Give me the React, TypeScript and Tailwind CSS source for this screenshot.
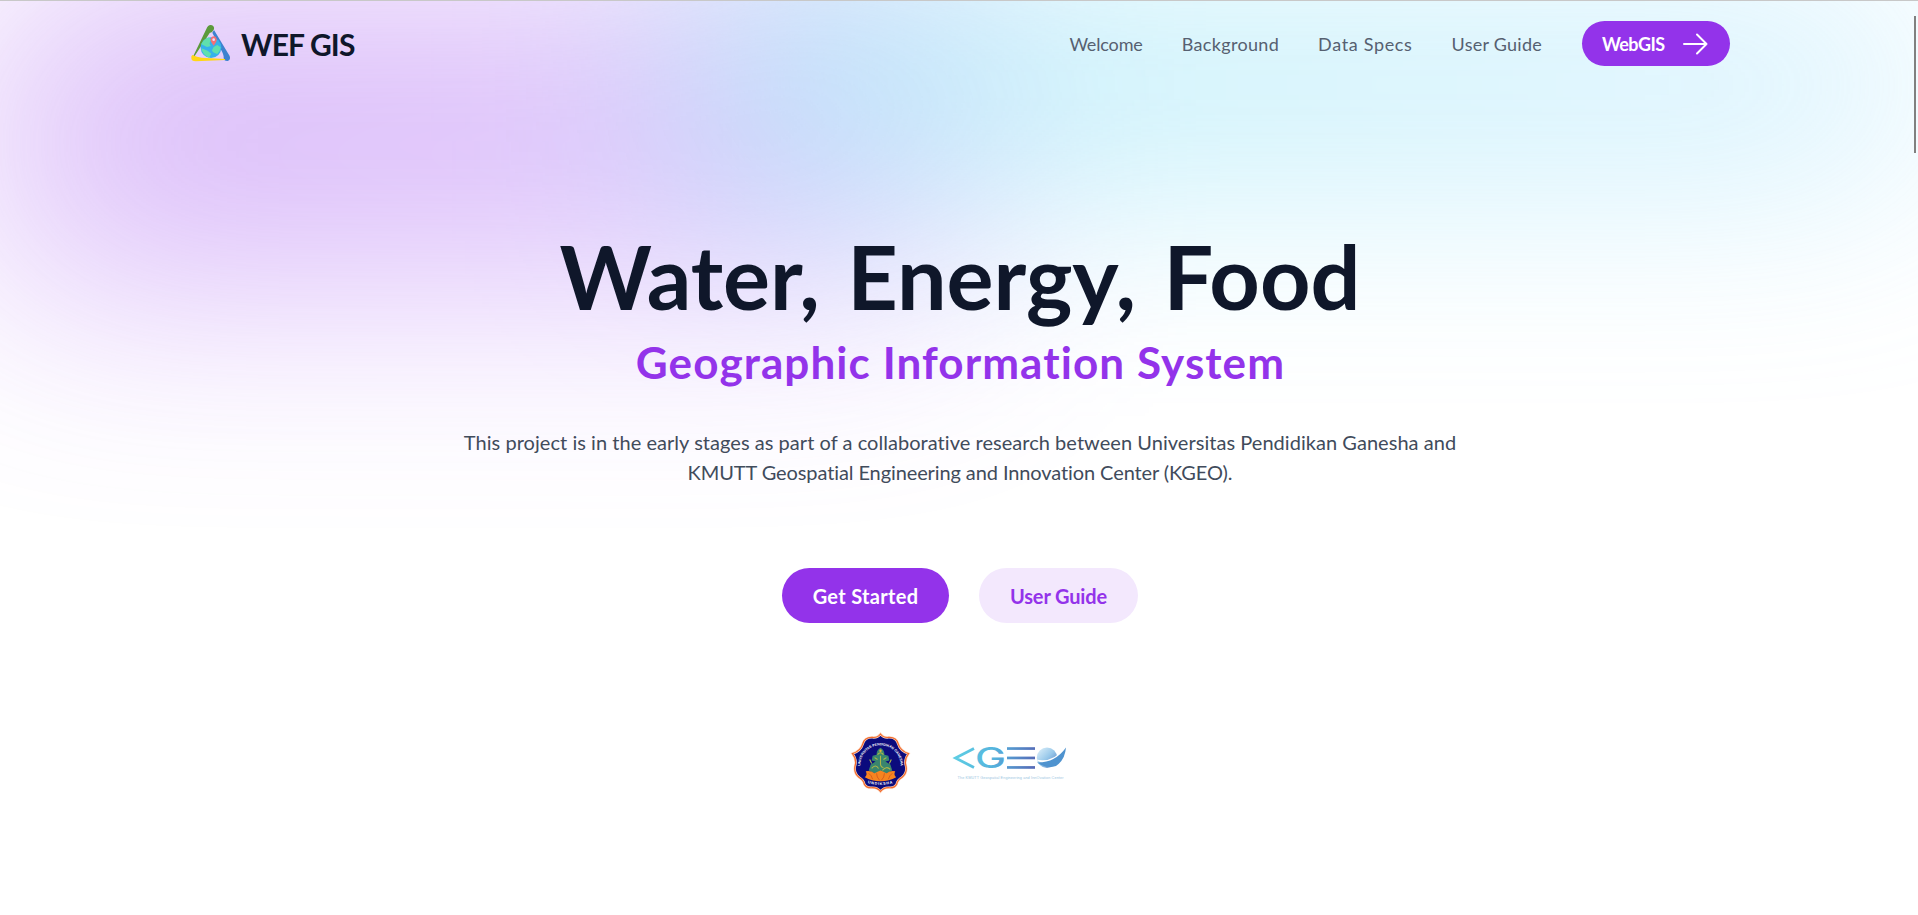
import type { ReactNode } from "react";

const CREST =
  "M30 1 Q33 5 38 4.5 Q46 4 48 11 Q50 18 58.5 21 Q54.5 26 55.5 32 Q58 40 52 45 Q47 48 46.5 52 Q44 56.5 38 55.5 Q33 55.5 30 59.5 Q27 55.5 22 55.5 Q16 56.5 13.5 52 Q13 48 8 45 Q2 40 4.5 32 Q5.5 26 1.5 21 Q10 18 12 11 Q14 4 22 4.5 Q27 5 30 1 Z";

function WefMark() {
  return (
    <svg viewBox="15 14 126 116" className="h-[38.67px] w-[42px] shrink-0" aria-hidden="true">
      <path d="M22 116 L64 29 Q69 16 78 17 Q89 19 87 30 Q84 38 74 41 L27 113 Z" fill="#5c9a3c" />
      <path d="M87 32 L134 110 Q138 122 128 125 Q117 126 116 116 Q117 106 108 91 L82 40 Z" fill="#3d82cf" />
      <path d="M22 107 Q36 113 50 115 L120 119 L120 122 L32 126 Q19 126 19 117 Q18 110 22 107 Z" fill="#ffd615" />
      <circle cx="78" cy="85" r="31" fill="#35b2ea" />
      <path d="M49 75 Q56 58 72 54 L78 62 Q70 74 78 80 L66 83 Z M49 87 L68 94 L79 103 L72 115 Q53 108 49 87 Z M86 83 L97 77 L107 84 Q106 96 97 104 Q83 101 81 93 Z" fill="#5fe0ad" />
      <path d="M86 79 Q75 65 77 58 Q80 51 86 51 Q93 51 95 58 Q97 65 86 79 Z" fill="#f36f76" />
      <circle cx="86" cy="61" r="4" fill="#e9dffa" />
    </svg>
  );
}

function UndikshaEmblem() {
  return (
    <svg viewBox="0 0 60 61" className="h-[60px] w-[59px] shrink-0 overflow-visible" aria-label="Undiksha">
      <path d={CREST} fill="#0b0b7d" stroke="#fbd9c4" strokeWidth="2.4" />
      <path d={CREST} fill="none" stroke="#f26a2c" strokeWidth="1.2" />
      <defs>
        <path id="crest-top" d="M9.5 33 A20.5 20.5 0 0 1 50.5 33" />
        <path id="crest-bottom" d="M14 50 Q30 55.5 46 50" />
      </defs>
      <g fill="#fff" fontFamily="Liberation Sans, sans-serif" fontWeight="700" textAnchor="middle">
        <text fontSize="3.5"><textPath href="#crest-top" startOffset="50%">UNIVERSITAS PENDIDIKAN GANESHA</textPath></text>
        <text fontSize="3.8" letterSpacing="0.8"><textPath href="#crest-bottom" startOffset="50%">UNDIKSHA</textPath></text>
      </g>
      <path d="M26 22 Q26 17 30 15 Q34 17 34 22 L38 23 L39 28 L35 29 L40 32 L42 38 L36 41 L24 41 L18 38 L20 32 L25 29 L21 28 L22 23 Z" fill="#39856e" />
      <path d="M27 22 Q30 18 33 22 M30 23 L30 31 Q30 35 33 35 M24 25 L27 27 M36 25 L33 27 M21 36 Q25 31 28 36 M32 38 Q36 33 40 37 M19 27 L21 31 M41 27 L39 31" fill="none" stroke="#b0b746" strokeWidth="1.1" />
      <circle cx="30" cy="18" r="1.2" fill="#e3b53a" />
      <path d="M15 39 Q20 38 24 41 Q27 39 30 38 Q33 39 36 41 Q40 38 45 39 Q43 43 46 45 Q39 49 30 49 Q21 49 14 45 Q17 43 15 39 Z" fill="#f78420" />
      <path d="M18 41 Q21 43 22 47 M26 41 Q26 45 29 48 M34 41 Q34 45 31 48 M42 41 Q39 43 38 47" fill="none" stroke="#c94f1d" strokeWidth="0.7" />
    </svg>
  );
}

function KgeoLogo() {
  return (
    <svg viewBox="0 0 116 36" className="h-[36px] w-[116px] shrink-0 overflow-visible" aria-label="KGEO">
      <defs>
        <linearGradient id="kgeo" gradientUnits="userSpaceOnUse" x1="0" y1="0" x2="84" y2="14">
          <stop offset="0" stopColor="#5fd0e4" />
          <stop offset="0.5" stopColor="#55b3dd" />
          <stop offset="1" stopColor="#5567b5" />
        </linearGradient>
        <linearGradient id="orb" x1="0" y1="0" x2="1" y2="1">
          <stop offset="0" stopColor="#e2f3fb" />
          <stop offset="0.5" stopColor="#98c8ea" />
          <stop offset="1" stopColor="#4e78bd" />
        </linearGradient>
      </defs>
      <path d="M21 3.5 L2.5 13 L21 22.5" fill="none" stroke="url(#kgeo)" strokeWidth="2.8" />
      <text x="22" y="23.4" fontFamily="Inter, sans-serif" fontSize="28" fontWeight="500" fill="url(#kgeo)" textLength="31" lengthAdjust="spacingAndGlyphs">G</text>
      <g fill="url(#kgeo)">
        <rect x="54" y="2.2" width="28" height="2.7" />
        <rect x="54" y="11.6" width="28" height="2.7" />
        <rect x="54" y="21.1" width="28" height="2.7" />
      </g>
      <circle cx="94" cy="12.8" r="10.2" fill="url(#orb)" />
      <path d="M83 14.5 Q99 18.5 112 3 Q107 16 96 18.5 Q88 19 83 14.5 Z" fill="#fff" />
      <path d="M84 17.5 Q102 18 113 2.5 Q112 15 103 21 Q93 24 84 17.5 Z" fill="#4f93cf" />
      <text x="4.5" y="34" fontFamily="Liberation Sans, sans-serif" fontSize="3.8" fill="#9cc6e2" textLength="106">The KMUTT Geospatial Engineering and InnOvation Center</text>
    </svg>
  );
}

function NavLink({ children, className }: { children: ReactNode; className: string }) {
  return <a href="#" className={`text-[18px] leading-[28px] whitespace-nowrap text-[#566070] ${className}`}>{children}</a>;
}

export default function App() {
  return (
    <div className="relative h-[915px] w-full overflow-hidden border-t border-[#c8c8c8] bg-white font-['Lato',sans-serif]">
      <div aria-hidden="true" className="absolute inset-0 grid grid-cols-2 opacity-[0.43]">
        <div className="h-[280px] bg-gradient-to-br from-[#9333ea] to-[#c084fc] blur-[118px]" />
        <div className="-ml-[260px] h-[168px] bg-gradient-to-r from-[#22d3ee] to-[#93dbfd] blur-[112px]" />
      </div>

      <div className="relative mx-auto flex w-[1600px] flex-col pr-[29px] pl-[31px]">
        <header className="flex h-[65px] items-center justify-between pt-5">
          <a href="#" className="flex items-center gap-[9px]">
            <WefMark />
            <span className="text-[30px] leading-[36px] font-bold tracking-[-0.85px] text-[#0f172a]">WEF GIS</span>
          </a>
          <nav className="flex items-center">
            <NavLink className="mr-[39px] tracking-[-0.14px]">Welcome</NavLink>
            <NavLink className="mr-[39px] tracking-[0.33px]">Background</NavLink>
            <NavLink className="mr-[39px] tracking-[0.66px]">Data Specs</NavLink>
            <NavLink className="mr-[40px] tracking-[0.26px]">User Guide</NavLink>
            <a href="#" className="flex h-[45px] w-[148px] items-center justify-between rounded-full bg-[#9333ea] pr-[22px] pl-5 text-white">
              <span className="text-[18px] leading-[28px] font-bold tracking-[-0.55px]">WebGIS</span>
              <svg viewBox="0 0 26 22" className="h-[22px] w-[26px]" fill="none" stroke="currentColor" strokeWidth="2" strokeLinecap="round" strokeLinejoin="round">
                <path d="M2 11 H24.5 M15 1.5 L24.5 11 L15 20.5" />
              </svg>
            </a>
          </nav>
        </header>

        <main className="flex flex-col items-center pt-[166px] text-center">
          <h1 className="text-[88px] leading-[88px] font-bold [word-spacing:6px] whitespace-nowrap text-[#0f172a]">Water, Energy, Food</h1>
          <h2 className="mt-5 pl-px text-[44px] leading-[44px] font-bold tracking-[1.09px] whitespace-nowrap text-[#9333ea]">Geographic Information System</h2>
          <p className="mt-[43px] text-[20px] leading-[30px] text-[#414b5b]">
            <span className="block tracking-[0.04px] whitespace-nowrap">This project is in the early stages as part of a collaborative research between Universitas Pendidikan Ganesha and</span>
            <span className="block tracking-[-0.1px] whitespace-nowrap">KMUTT Geospatial Engineering and Innovation Center (KGEO).</span>
          </p>
          <div className="mt-[81px] flex gap-[30px]">
            <a href="#" className="flex h-[55px] w-[167px] items-center justify-center rounded-full bg-[#9333ea] text-[20px] font-bold tracking-[0.31px] text-white">Get Started</a>
            <a href="#" className="flex h-[55px] w-[159px] items-center justify-center rounded-full bg-[#f3e8fd] text-[20px] font-bold tracking-[-0.14px] text-[#9333ea]">User Guide</a>
          </div>
          <div className="mt-[110px] flex items-start gap-[43px] pr-px">
            <UndikshaEmblem />
            <div className="pt-[12px]"><KgeoLogo /></div>
          </div>
        </main>
      </div>

      <div className="absolute top-[15px] right-[2px] h-[137px] w-[2px] bg-[#808080]" />
    </div>
  );
}
